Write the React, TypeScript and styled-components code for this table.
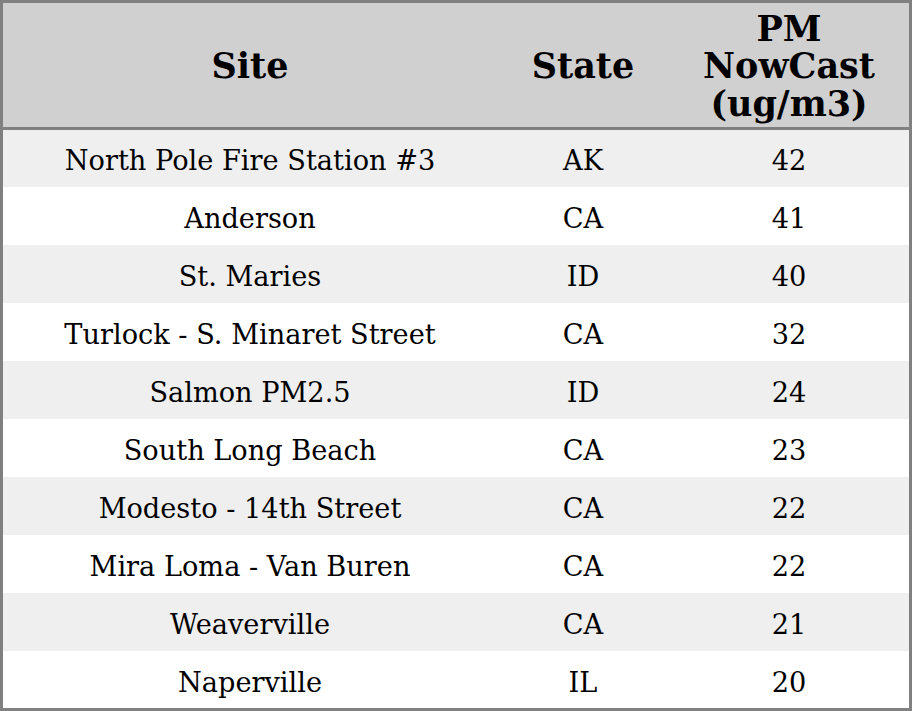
import React from "react";
import styled, { createGlobalStyle } from "styled-components";

const Global = createGlobalStyle`
  html, body { margin: 0; padding: 0; background: #ffffff; }
  body { font-family: "DejaVu Serif", serif; }
`;

const Frame = styled.div`
  width: 912px;
  height: 711px;
  box-sizing: border-box;
  border: 3px solid #808080;
  display: flex;
  flex-direction: column;
  overflow: hidden;
`;

const Table = styled.table`
  width: 100%;
  border-collapse: collapse;
  table-layout: fixed;
  font-family: "DejaVu Serif", serif;
  color: #000;
`;

const HeadCell = styled.th<{ $w: number }>`
  width: ${(p) => p.$w}px;
  background: #d0d0d0;
  font-size: 35px;
  font-weight: bold;
  line-height: 37.5px;
  text-align: center;
  height: 125px;
  padding: 2px 0 0 0;
  border-bottom: 3px solid #808080;
  box-sizing: border-box;
`;

const Row = styled.tr<{ $alt: boolean }>`
  background: ${(p) => (p.$alt ? "#efefef" : "#ffffff")};
  height: 58px;
  &:first-child {
    height: 59px;
  }
`;

const Cell = styled.td`
  font-size: 27.2px;
  text-align: center;
  padding: 6px 0 0 0;
  line-height: 30px;
  box-sizing: border-box;
`;

const rows: [string, string, string][] = [
  ["North Pole Fire Station #3", "AK", "42"],
  ["Anderson", "CA", "41"],
  ["St. Maries", "ID", "40"],
  ["Turlock - S. Minaret Street", "CA", "32"],
  ["Salmon PM2.5", "ID", "24"],
  ["South Long Beach", "CA", "23"],
  ["Modesto - 14th Street", "CA", "22"],
  ["Mira Loma - Van Buren", "CA", "22"],
  ["Weaverville", "CA", "21"],
  ["Naperville", "IL", "20"],
];

export default function App() {
  return (
    <>
      <Global />
      <Frame>
        <Table>
          <thead>
            <tr>
              <HeadCell $w={494}>Site</HeadCell>
              <HeadCell $w={172}>State</HeadCell>
              <HeadCell $w={240}>
                PM
                <br />
                NowCast
                <br />
                (ug/m3)
              </HeadCell>
            </tr>
          </thead>
          <tbody>
            {rows.map((r, i) => (
              <Row key={i} $alt={i % 2 === 0}>
                <Cell>{r[0]}</Cell>
                <Cell>{r[1]}</Cell>
                <Cell>{r[2]}</Cell>
              </Row>
            ))}
          </tbody>
        </Table>
      </Frame>
    </>
  );
}
